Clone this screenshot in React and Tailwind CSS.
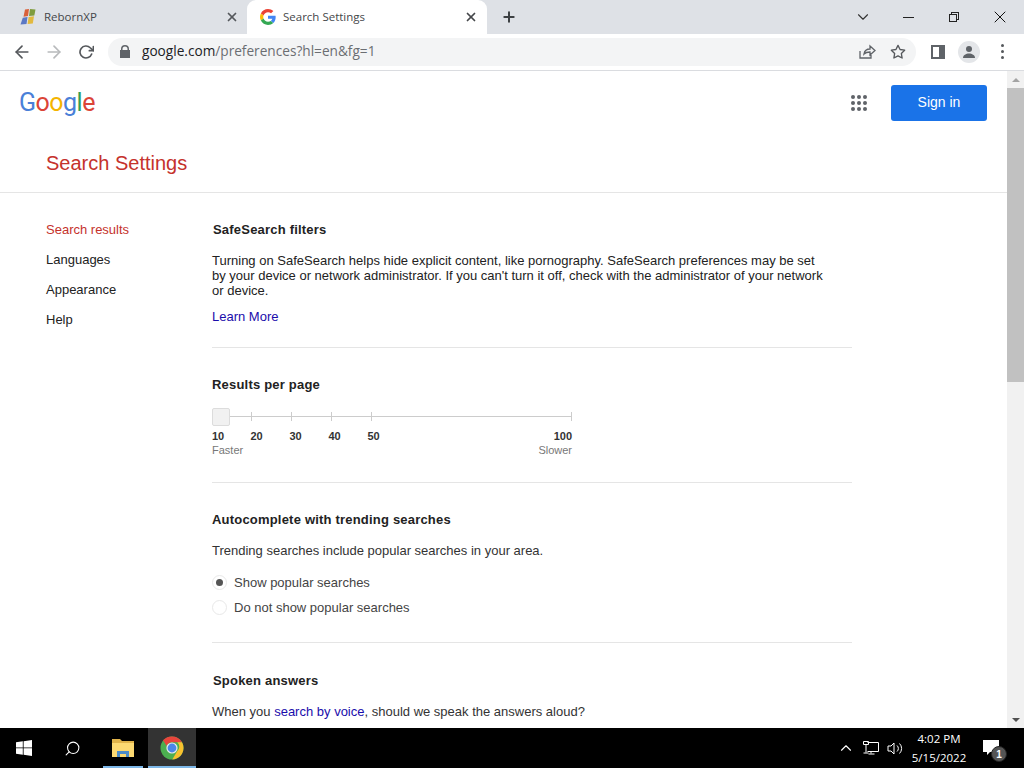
import React from "react";
import {
  FiArrowLeft,
  FiArrowRight,
  FiRotateCw,
  FiStar,
  FiChevronDown,
  FiX,
  FiPlus,
  FiSearch,
  FiChevronUp,
} from "react-icons/fi";

const GIcon = () => (
  <svg width="16" height="16" viewBox="0 0 48 48">
    <path fill="#EA4335" d="M24 9.5c3.5 0 6.700 1.200 9.200 3.600l6.900-6.900C35.900 2.400 30.500 0 24 0 14.600 0 6.500 5.400 2.600 13.200l8 6.200C12.500 13.700 17.800 9.500 24 9.500z" />
    <path fill="#4285F4" d="M47 24.500c0-1.600-.1-3.100-.4-4.500H24v9h12.900c-.6 3-2.200 5.500-4.700 7.200l7.700 6C44.400 37.600 47 31.600 47 24.500z" />
    <path fill="#FBBC05" d="M10.500 28.600c-.5-1.400-.8-3-.8-4.600s.3-3.200.8-4.600l-8-6.200C.9 16.500 0 20.100 0 24s.9 7.500 2.600 10.800l7.900-6.200z" />
    <path fill="#34A853" d="M24 48c6.500 0 11.900-2.100 15.900-5.800l-7.700-6c-2.200 1.400-4.900 2.300-8.200 2.300-6.200 0-11.500-4.200-13.400-9.900l-8 6.200C6.500 42.600 14.600 48 24 48z" />
  </svg>
);

const XpFlag = () => (
  <svg width="18" height="18" viewBox="0 0 18 18">
    <path fill="#d9603a" d="M6 1.500 10 1 9 8 4.500 8.800z" />
    <path fill="#7f9c3e" d="M11 1 16.500 1.500 15.300 7.500 10 8z" />
    <path fill="#5b78c4" d="M3.800 9.800 8.500 9 7.500 16 1.500 16.500z" />
    <path fill="#e2b93f" d="M9.600 9 15 8.300 13.800 15.500 8.600 16z" />
  </svg>
);

const ChromeIcon = () => (
  <svg width="24" height="24" viewBox="0 0 24 24">
    <circle cx="12" cy="12" r="11.500" fill="#4caf50" />
    <path fill="#e8453c" d="M12 .5a11.500 11.500 0 0 1 10 5.800H12a5.700 5.700 0 0 0-5.300 3.600L3 4.300A11.500 11.500 0 0 1 12 .5z" />
    <path fill="#f9c02f" d="M22 6.300a11.500 11.500 0 0 1-9.700 17.200l5-8.500a5.700 5.700 0 0 0 0-8.700z" />
    <circle cx="12" cy="12" r="5.600" fill="#e8eaed" />
    <circle cx="12" cy="12" r="4.400" fill="#4a86e8" />
  </svg>
);

const WinLogo = () => (
  <svg width="16" height="16" viewBox="0 0 16 16" fill="#fff">
    <path d="M0 2.300 6.800 1.300V7.500H0zM7.600 1.200 16 0V7.500H7.600zM0 8.300H6.800V14.700L0 13.700zM7.600 8.300H16V16L7.600 14.800z" />
  </svg>
);

const FolderIcon = () => (
  <svg width="22" height="20" viewBox="0 0 22 20">
    <path fill="#e0b34a" d="M0 1h8l2 2h12v3H0z" />
    <path fill="#fcd972" d="M0 5h22v14H0z" />
    <path fill="#4d8cc8" d="M5 13h12v6h-3v-3H8v3H5z" />
  </svg>
);

const Slider = () => {
  const ticks = [39, 79, 119, 159, 359];
  return (
    <div className="w-[360px]">
      <div className="relative h-[18px]">
        <div className="absolute left-0 right-0 top-[8px] h-px bg-[#ccc]" />
        {ticks.map((t) => (
          <div key={t} className="absolute top-[4px] h-[9px] w-px bg-[#ccc]" style={{ left: t }} />
        ))}
        <div className="absolute left-0 top-0 h-[18px] w-[18px] rounded-[2px] border border-[#dcdcdc] bg-[#f1f1f1]" />
      </div>
      <div className="mt-[3px] flex h-[14px] items-center text-[11px] font-bold leading-[14px] text-[#333]">
        <span className="w-[38.500px]">10</span>
        <span className="w-[39px]">20</span>
        <span className="w-[39px]">30</span>
        <span className="w-[39px]">40</span>
        <span>50</span>
        <span className="ml-auto">100</span>
      </div>
      <div className="flex justify-between text-[11px] leading-[14px] text-[#777]">
        <span>Faster</span>
        <span>Slower</span>
      </div>
    </div>
  );
};

const Radio = ({ checked, label }) => (
  <div className="flex h-[25px] items-center">
    <span className="flex h-[15px] w-[15px] items-center justify-center rounded-full border border-[#e8e8e8] bg-white">
      {checked && <span className="h-[7px] w-[7px] rounded-full bg-[#555]" />}
    </span>
    <span className="ml-[7px] text-[13px] text-[#444]">{label}</span>
  </div>
);

const App = () => {
  return (
    <div className="flex h-screen w-[1024px] flex-col overflow-hidden bg-white font-['Liberation_Sans',Arial,sans-serif]">
      {/* tab strip */}
      <div className="flex h-[34px] shrink-0 items-stretch bg-[#dee1e6] font-['Open_Sans',sans-serif] text-[11.500px] text-[#45474a]">
        <div className="flex w-[247px] items-center pl-[19px] pr-[7px]">
          <XpFlag />
          <span className="ml-[7px]">RebornXP</span>
          <FiX size={14} strokeWidth={3} className="ml-auto mr-[1px] text-[#55585c]" />
        </div>
        <div className="flex w-[240px] items-center rounded-t-[9px] bg-white pl-[13px] pr-[9px]">
          <GIcon />
          <span className="ml-[7px]">Search Settings</span>
          <FiX size={14} strokeWidth={3} className="ml-auto text-[#45474a]" />
        </div>
        <div className="flex items-center pl-[14px]">
          <FiPlus size={16} strokeWidth={3} className="text-[#3c4043]" />
        </div>
        <div className="ml-auto flex items-center text-[#333]">
          <FiChevronDown size={18} strokeWidth={1.500} className="mr-[31px]" />
          <span className="mr-[35px] h-px w-[11px] bg-[#222]" />
          <span className="relative mr-[31px] h-[10px] w-[10px]">
            <span className="absolute right-0 top-0 h-[8px] w-[8px] border border-[#222]" />
            <span className="absolute bottom-0 left-0 h-[8px] w-[8px] border border-[#222] bg-[#dee1e6]" />
          </span>
          <FiX size={20} strokeWidth={1.200} className="mr-[14px] text-[#111]" />
        </div>
      </div>

      {/* toolbar */}
      <div className="flex h-[37px] shrink-0 items-center border-b border-[#dadce0] bg-white pb-px">
        <FiArrowLeft size={20} strokeWidth={2} className="ml-[12px] text-[#55585c]" />
        <FiArrowRight size={20} strokeWidth={2} className="ml-[12px] text-[#b8babc]" />
        <FiRotateCw size={16} strokeWidth={2.500} className="ml-[14px] text-[#55585c]" />
        <div className="ml-[14px] flex h-[28px] w-[808px] items-center rounded-full bg-[#f3f4f5] pl-[11px] pr-[10px]">
          <svg width="12" height="14" viewBox="0 0 12 14" fill="#5f6368">
            <path d="M2 5V4a4 4 0 0 1 8 0v1h1v8H1V5zm1.500 0h5V4a2.500 2.500 0 0 0-5 0z" />
          </svg>
          <span className="ml-[11px] font-['Open_Sans',sans-serif] text-[13.650px] text-[#6b6e72]">
            <span className="text-[#202124]">google.com</span>/preferences?hl=en&amp;fg=1
          </span>
          <svg width="18" height="18" viewBox="0 0 18 18" fill="none" stroke="#5f6368" strokeWidth="1.300" className="ml-auto">
            <path d="M2 8v7h11v-3M6 11c.5-3 3-5 6-5V3l5 4.500L12 12V9c-2.500 0-4.500.5-6 2z" />
          </svg>
          <FiStar size={16} strokeWidth={2} className="ml-[14px] text-[#55585c]" />
        </div>
        <svg width="14" height="14" viewBox="0 0 14 14" className="ml-[15px]">
          <path fill="#5f6368" d="M0 0h14v14H0z" />
          <path fill="#fff" d="M2 2h6v10H2z" />
        </svg>
        <div className="ml-[13px] flex h-[22px] w-[22px] items-center justify-center overflow-hidden rounded-full bg-[#e4e6e9]">
          <svg width="14" height="14" viewBox="0 0 14 14" fill="#5f6368">
            <circle cx="7" cy="4" r="3" />
            <path d="M1 13c0-3 3-4.500 6-4.500s6 1.500 6 4.500z" />
          </svg>
        </div>
        <div className="ml-[21px] flex flex-col gap-[3px]">
          <span className="h-[3px] w-[3px] rounded-full bg-[#55585c]" />
          <span className="h-[3px] w-[3px] rounded-full bg-[#55585c]" />
          <span className="h-[3px] w-[3px] rounded-full bg-[#55585c]" />
        </div>
      </div>

      {/* page plus scrollbar */}
      <div className="flex min-h-0 flex-1">
        <div className="min-w-0 flex-1 overflow-hidden">
          <div className="h-[122px] border-b border-[#e5e5e5]">
            <div className="flex h-[63px] items-center pl-[19px] pr-[20px]">
              <span className="font-['Roboto',sans-serif] text-[25px] font-normal leading-none tracking-[-0.500px]">
                <span className="text-[#4a80d8]">G</span>
                <span className="text-[#db4437]">o</span>
                <span className="text-[#f4b400]">o</span>
                <span className="text-[#4a80d8]">g</span>
                <span className="text-[#2f9e58]">l</span>
                <span className="text-[#db4437]">e</span>
              </span>
              <div className="ml-auto grid grid-cols-3 gap-[2px]">
                {[...Array(9)].map((_, i) => (
                  <span key={i} className="h-[4px] w-[4px] rounded-full bg-[#5f6368]" />
                ))}
              </div>
              <div className="ml-[24px] flex h-[36px] w-[96px] items-center justify-center rounded-[3px] bg-[#1a73e8] text-[14px] font-medium text-white">
                Sign in
              </div>
            </div>
            <div className="pl-[46px] pt-[16px] text-[20px] leading-[26px] text-[#c5322c]">Search Settings</div>
          </div>

          <div className="flex pl-[46px] pt-[22px]">
            <nav className="w-[166px] shrink-0 pt-px text-[13px] text-[#222]">
              <div className="h-[30px] leading-[28px] text-[#c5322c]">Search results</div>
              <div className="h-[30px] leading-[28px]">Languages</div>
              <div className="h-[30px] leading-[28px]">Appearance</div>
              <div className="h-[30px] leading-[28px]">Help</div>
            </nav>
            <main className="w-[640px] text-[13px] text-[#222]">
              <section className="h-[133px] border-b border-[#e5e5e5]">
                <h2 className="h-[30px] pl-px pt-px text-[13px] font-bold leading-[28px] tracking-[0.2px] text-[#222]">SafeSearch filters</h2>
                <p className="w-[620px] pt-[8px] leading-[15px]">
                  Turning on SafeSearch helps hide explicit content, like pornography. SafeSearch preferences may be set by your device or network administrator. If you can't turn it off, check with the administrator of your network or device.
                </p>
                <div className="pt-[9px] text-[#1a0dab]">Learn More</div>
              </section>

              <section className="h-[135px] border-b border-[#e5e5e5] pt-[28px]">
                <h2 className="h-[32px] text-[13px] font-bold leading-[18px] tracking-[0.2px]">Results per page</h2>
                <Slider />
              </section>

              <section className="h-[160px] border-b border-[#e5e5e5] pt-[28px]">
                <h2 className="h-[30px] text-[13px] font-bold leading-[18px] tracking-[0.2px]">Autocomplete with trending searches</h2>
                <p className="h-[20px] leading-[20px] text-[#333]">Trending searches include popular searches in your area.</p>
                <div className="pt-[9px]">
                  <Radio checked label="Show popular searches" />
                  <Radio label="Do not show popular searches" />
                </div>
              </section>

              <section className="pt-[29px]">
                <h2 className="h-[30px] pl-px text-[13px] font-bold leading-[18px] tracking-[0.2px]">Spoken answers</h2>
                <p className="leading-[20px] text-[#333]">
                  When you <span className="text-[#1a0dab]">search by voice</span>, should we speak the answers aloud?
                </p>
              </section>
            </main>
          </div>
        </div>

        {/* scrollbar */}
        <div className="flex w-[17px] shrink-0 flex-col bg-[#f1f1f1]">
          <div className="flex h-[17px] items-center justify-center">
            <span className="h-0 w-0 border-x-[4px] border-b-[4px] border-x-transparent border-b-[#a3a3a3]" />
          </div>
          <div className="h-[294px] bg-[#c1c1c1]" />
          <div className="mt-auto flex h-[17px] items-center justify-center">
            <span className="h-0 w-0 border-x-[4px] border-t-[4px] border-x-transparent border-t-[#505050]" />
          </div>
        </div>
      </div>

      {/* taskbar */}
      <div className="flex h-[40px] shrink-0 items-center bg-black text-white">
        <div className="ml-[16px]"><WinLogo /></div>
        <FiSearch size={17} strokeWidth={1.500} className="ml-[32px] -scale-x-100 text-white" />
        <div className="relative ml-[22px] flex h-[40px] w-[40px] items-center justify-center">
          <FolderIcon />
          <span className="absolute bottom-0 left-0 right-0 h-[2px] bg-[#7db7e8]" />
        </div>
        <div className="relative ml-[5px] flex h-[40px] w-[48px] items-center justify-center bg-[#333]">
          <ChromeIcon />
          <span className="absolute bottom-0 left-0 right-0 h-[2px] bg-[#7db7e8]" />
        </div>
        <FiChevronUp size={18} strokeWidth={1.500} className="ml-[641px]" />
        <svg width="16" height="16" viewBox="0 0 16 16" fill="none" stroke="#fff" className="ml-[8px]">
          <path d="M4.500 2.500h11v9h-11M.5 1.500h5v3h-5zM3 4.500v8M.5 13h5M8 11.500v2M5.500 14h6" />
        </svg>
        <svg width="16" height="16" viewBox="0 0 16 16" fill="none" stroke="#fff" className="ml-[8px]">
          <path d="M1 6h3l3-3v11l-3-3H1zM10 5.500a4 4 0 0 1 0 6M12.500 3.500a7 7 0 0 1 0 10" />
        </svg>
        <div className="w-[72px] text-center font-['Open_Sans',sans-serif] text-[11.500px] leading-[19px]">
          <div>4:02 PM</div>
          <div>5/15/2022</div>
        </div>
        <div className="relative ml-[8px] h-[16px] w-[16px]">
          <svg width="16" height="15" viewBox="0 0 16 15" fill="#fff">
            <path d="M0 0h16v12H7l-3 3v-3H0z" />
          </svg>
          <span className="absolute left-[8px] top-[6px] flex h-[16px] w-[16px] items-center justify-center rounded-full border border-[#222] bg-[#555] text-[10px] font-bold">1</span>
        </div>
      </div>
    </div>
  );
};

export default App;
